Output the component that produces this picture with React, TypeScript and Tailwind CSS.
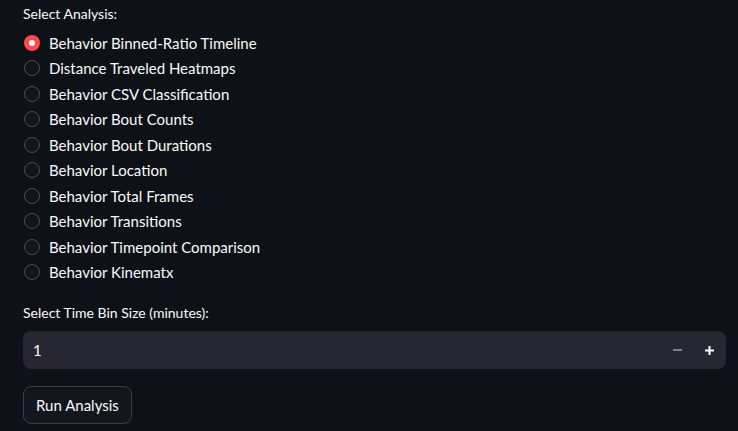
import { useState } from "react";

const options = [
  "Behavior Binned-Ratio Timeline",
  "Distance Traveled Heatmaps",
  "Behavior CSV Classification",
  "Behavior Bout Counts",
  "Behavior Bout Durations",
  "Behavior Location",
  "Behavior Total Frames",
  "Behavior Transitions",
  "Behavior Timepoint Comparison",
  "Behavior Kinematx",
];

export default function App() {
  const [selected, setSelected] = useState(0);
  const [bin, setBin] = useState(1);

  return (
    <div className="w-[738px] h-[431px] bg-[#0e1117] text-[#fafafa] px-[23px] pt-[5px] font-['Lato','Liberation_Sans',sans-serif] overflow-hidden">
      <div className="text-[14px] h-[18px] leading-[18px]">Select Analysis:</div>

      <div className="mt-[7px] flex flex-col">
        {options.map((opt, i) => (
          <label
            key={opt}
            className="h-[25.5px] flex items-center gap-[9px] cursor-pointer"
            onClick={() => setSelected(i)}
          >
            <span
              className={
                i === selected
                  ? "w-4 h-4 rounded-full bg-[#ff4b4b] flex items-center justify-center ml-[1px]"
                  : "w-4 h-4 rounded-full border border-[#4b4e56] bg-[#12151c] ml-[1px]"
              }
            >
              {i === selected && <span className="w-[6px] h-[6px] rounded-full bg-white" />}
            </span>
            <span className="text-[15px]">{opt}</span>
          </label>
        ))}
      </div>

      <div className="mt-[19px] text-[14px] h-[18px] leading-[18px]">Select Time Bin Size (minutes):</div>

      <div className="mt-[9px] h-[38px] w-[703px] rounded-lg bg-[#262730] flex items-center">
        <span className="flex-1 pl-[10px] text-[15px]">{bin}</span>
        <button
          className="w-8 h-full flex items-center justify-center text-[#7d7f8a]"
          onClick={() => setBin(Math.max(1, bin - 1))}
        >
          <svg width="9" height="2" viewBox="0 0 9 2">
            <rect width="9" height="2" fill="currentColor" />
          </svg>
        </button>
        <button
          className="w-8 h-full flex items-center justify-center text-white mr-[1px]"
          onClick={() => setBin(bin + 1)}
        >
          <svg width="9" height="9" viewBox="0 0 9 9">
            <rect x="3.5" width="2" height="9" fill="currentColor" />
            <rect y="3.5" width="9" height="2" fill="currentColor" />
          </svg>
        </button>
      </div>

      <button className="mt-[17px] h-[38px] px-[12px] rounded-lg border border-[#3a3d45] bg-[#13161d] text-[15px]">
        Run Analysis
      </button>
    </div>
  );
}
